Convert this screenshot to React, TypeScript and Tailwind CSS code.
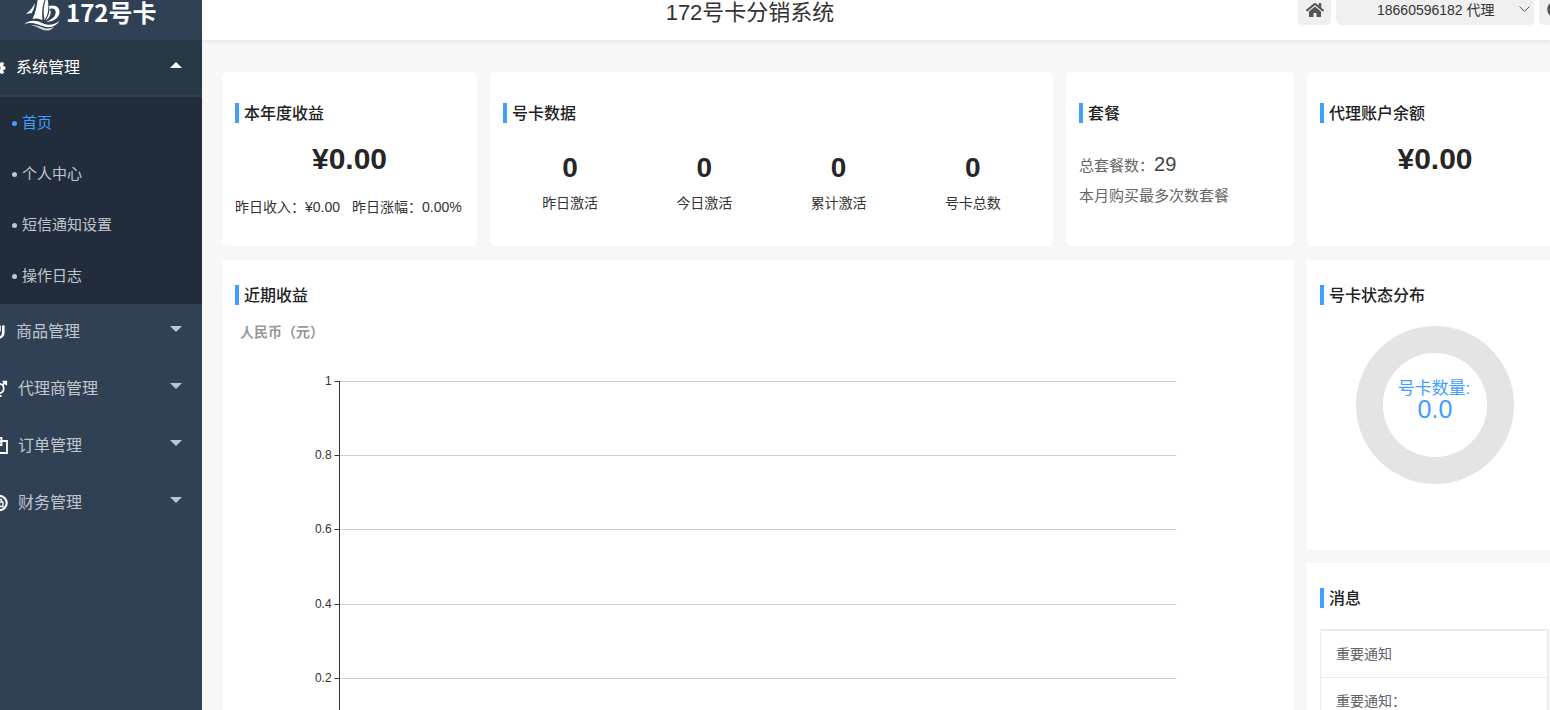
import { useState } from 'react'
import type { ReactNode } from 'react'
import { FaHome, FaPowerOff } from 'react-icons/fa'

interface MenuGroup {
  label: string
  icon: ReactNode
  wide?: boolean
  children?: string[]
}

const TEETH = [0, 45, 90, 135, 180, 225, 270, 315]

const GearIcon = () => (
  <svg width="16" height="16" viewBox="0 0 16 16" fill="currentColor">
    <circle cx="8" cy="8" r="4.2" fill="none" stroke="currentColor" strokeWidth="3.4" />
    {TEETH.map((deg) => (
      <path key={deg} d="M6.200 3 6.600.6h2.800L9.800 3z" transform={`rotate(${deg} 8 8)`} />
    ))}
  </svg>
)

const MagnetIcon = () => (
  <svg width="16" height="16" viewBox="0 0 16 16" fill="none" stroke="currentColor" strokeWidth="2.6">
    <path d="M3.500 1.500v7a4.900 5.200 0 0 0 9.800 0v-7M9.500 1.500v6" />
  </svg>
)

const AgentIcon = () => (
  <svg width="18" height="18" viewBox="0 0 18 18" fill="none" stroke="currentColor" strokeWidth="1.8">
    <circle cx="9" cy="8.5" r="4.7" />
    <path d="M12.5 5 16 1.8M12.5 1.6h3.7v3.7M9 13.2V18M6.5 16h5" />
  </svg>
)

const CopyIcon = () => (
  <svg width="18" height="18" viewBox="0 0 18 18" fill="none" stroke="currentColor" strokeWidth="1.8">
    <path d="M6 11H1.5V4L5 .9h6.5V4" />
    <path d="M5 .9V4H1.5" />
    <path d="M7.5 7.5 11 4h6v12H7.5z" />
    <path d="M11.5 4v4H8" />
  </svg>
)

const FinanceIcon = () => (
  <svg width="18" height="18" viewBox="0 0 18 18" fill="none" stroke="currentColor">
    <circle cx="9.5" cy="9" r="7.2" strokeWidth="2.2" />
    <path d="M6 8h7v4.5H6zM7.5 8V5.5h4V8M9.5 8.500v3.500" strokeWidth="1.3" />
  </svg>
)

const MENU: MenuGroup[] = [
  {
    label: '系统管理',
    icon: <GearIcon />,
    children: ['首页', '个人中心', '短信通知设置', '操作日志'],
  },
  { label: '商品管理', icon: <MagnetIcon /> },
  { label: '代理商管理', icon: <AgentIcon />, wide: true },
  { label: '订单管理', icon: <CopyIcon />, wide: true },
  { label: '财务管理', icon: <FinanceIcon />, wide: true },
]

const STATS = [
  { label: '昨日激活', value: 0 },
  { label: '今日激活', value: 0 },
  { label: '累计激活', value: 0 },
  { label: '号卡总数', value: 0 },
]

const MESSAGES = ['重要通知', '重要通知：']

const Y_LABELS = ['1', '0.8', '0.6', '0.4', '0.2']

/** Sail boat on two waves */
const Logo = () => (
  <svg width="38" height="34" viewBox="0 0 38 34" fill="#fff" className="shrink-0">
    <path d="M11 6C9 10 6 14 2 17c3-.8 4-1 5.500-.8C9.500 13 10.500 10 11 6z" />
    <path d="M14 0h8C18.500 7 17.500 14 18.500 23 15 21.500 12 21 8.500 22 12 15 13 8 14 0z" />
    <path d="M22.800 0C19.500 8 19 15 20.500 23c2-3 3.300-6 3.700-10 .4-5 .1-9-1.400-13z" />
    <path d="M25 9c6-2 11 1 10.500 6.500C35 21 29 25 22 25c5-2 9.500-5 9.700-9.500C31.800 12 29 10.500 25.500 12z" />
    <path d="M25.500 12c0 4-1.500 8-4 11.500 2.500-1.500 4.500-4 5-6.500.4-2 .2-3.500-1-5z" />
    <path d="M0 27.500c5-5 12-4.500 18-1.500 6 2.800 12 2.500 17.500-2.500C32 30 25 32 17 28.500 11 26 6 25 0 27.500z" />
    <path d="M7 28.500c5-1 8 .5 11 1.800 4 1.700 8 1.500 12-.3-3 4-8 4.500-12.500 2.300-3.500-1.800-6.500-3.500-10.500-3.800z" opacity=".8" />
  </svg>
)

const Caret = ({ up }: { up?: boolean }) => (
  <svg width="12" height="6" viewBox="0 0 12 6" fill="currentColor" className="mb-[6px]">
    {up ? <path d="M6 0l6 6H0z" /> : <path d="M0 0h12L6 6z" />}
  </svg>
)

function Sidebar() {
  const [active, setActive] = useState('首页')

  return (
    <aside className="w-[202px] shrink-0 overflow-hidden bg-[#304156] text-[#c2c6cc]">
      <div className="flex h-10 items-end gap-1 pl-6">
        <div className="flex h-full items-center pb-3">
          <Logo />
        </div>
        <span className="pb-4 font-['Noto_Sans_CJK_SC',sans-serif] text-2xl leading-6 font-bold text-white">
          172号卡
        </span>
      </div>
      <nav>
        {MENU.map((group) => (
          <div key={group.label}>
            <button
              type="button"
              className={
                group.children
                  ? 'flex h-[57px] w-full items-center border-b-2 border-[#304156] bg-[#293846] pr-5 text-white'
                  : 'flex h-[57px] w-full items-center pr-5 pb-[2px]'
              }
            >
              <span
                className={
                  group.wide
                    ? '-ml-[10px] flex w-7 shrink-0 text-white'
                    : '-ml-[10px] flex w-[26px] shrink-0 text-white'
                }
              >
                {group.icon}
              </span>
              <span className="flex-1 text-left text-base">{group.label}</span>
              <Caret up={!!group.children} />
            </button>
            {group.children && (
              <ul className="bg-[#212d3c] pt-px pb-[2px]">
                {group.children.map((item) => (
                  <li key={item}>
                    <a
                      href="#"
                      onClick={() => setActive(item)}
                      className={
                        item === active
                          ? 'flex h-[51px] items-center gap-[5px] pl-3 text-[15px] text-[#409eff]'
                          : 'flex h-[51px] items-center gap-[5px] pl-3 text-[15px]'
                      }
                    >
                      <span className="size-[5px] rounded-full bg-current" />
                      {item}
                    </a>
                  </li>
                ))}
              </ul>
            )}
          </div>
        ))}
      </nav>
    </aside>
  )
}

function Header() {
  return (
    <header className="z-10 flex h-10 shrink-0 items-start bg-white shadow-[0_1px_4px_rgba(0,21,41,0.1)]">
      <h1 className="flex-1 text-center text-[22px] leading-[26px] text-[#333]">172号卡分销系统</h1>
      <div className="-mr-[22px] flex gap-[5px] text-[#555]">
        <button
          type="button"
          aria-label="首页"
          className="flex h-[25px] w-[33px] items-center justify-center rounded-b-[5px] bg-[#efefef] pb-[6px]"
        >
          <FaHome size={18} />
        </button>
        <div className="relative w-[198px]">
          <select
            aria-label="账户"
            className="block h-[25px] w-full appearance-none rounded-b-[5px] bg-[#efefef] pb-[6px] pl-[41px] text-sm text-[#333]"
          >
            <option>18660596182 代理</option>
          </select>
          <svg
            className="pointer-events-none absolute top-[6px] right-1"
            width="11"
            height="7"
            viewBox="0 0 11 7"
            fill="none"
            stroke="#555"
          >
            <path d="M.5 .5l5 5 5-5" />
          </svg>
        </div>
        <button
          type="button"
          aria-label="退出"
          className="flex h-[25px] w-[33px] items-center justify-center rounded-b-[5px] bg-[#efefef] pb-[6px]"
        >
          <FaPowerOff size={17} />
        </button>
      </div>
    </header>
  )
}

const CardTitle = ({ children }: { children: ReactNode }) => (
  <h2 className="flex h-5 items-center border-l-4 border-[#409eff] pt-[2px] pl-[5px] text-base font-medium text-[#222]">
    {children}
  </h2>
)

const StatCard = ({ title, children }: { title: string; children: ReactNode }) => (
  <section className="h-[174px] rounded-[5px] bg-white px-[13px] pt-[31px]">
    <CardTitle>{title}</CardTitle>
    {children}
  </section>
)

const Money = ({ value }: { value: string }) => (
  <p className="mt-[18px] text-center text-3xl leading-9 font-bold text-[#262626]">¥{value}</p>
)

/** Empty line chart, only the value axis and its split lines */
function IncomeChart() {
  const top = 60
  const step = 74.4

  return (
    <svg width="100%" height="492" className="mt-4 block">
      <text x="5" y="16" fontSize="14" fontWeight="700" fill="#999">
        人民币（元）
      </text>
      {Y_LABELS.map((label, i) => {
        const y = Math.floor(top + i * step) + 0.5
        return (
          <g key={label}>
            <line x1="10%" x2="90%" y1={y} y2={y} stroke="#ccc" />
            <svg x="10%" y={y} overflow="visible">
              <line x1="-5" x2="0" y1="0" y2="0" stroke="#333" />
              <text x="-8" y="3" fontSize="12" textAnchor="end" fill="#333">
                {label}
              </text>
            </svg>
          </g>
        )
      })}
      <line x1="10%" x2="10%" y1={top} y2={top + step * 5} stroke="#333" shapeRendering="crispEdges" />
    </svg>
  )
}

function StatusRing() {
  return (
    <svg width="158" height="158" viewBox="0 0 158 158" className="mx-auto mt-[21px] block">
      <circle cx="79" cy="79" r="65.5" fill="none" stroke="#e4e4e4" strokeWidth="27" />
      <g fill="#409eff" textAnchor="middle">
        <text x="78" y="68" fontSize="17">
          号卡数量:
        </text>
        <text x="79" y="92" fontSize="25">
          0.0
        </text>
      </g>
    </svg>
  )
}

export default function App() {
  return (
    <div className="flex h-screen overflow-hidden bg-[#f7f7f7] font-['Liberation_Sans','Noto_Sans_CJK_SC',sans-serif] text-[#333]">
      <Sidebar />
      <div className="flex min-w-0 flex-1 flex-col overflow-hidden">
        <Header />
        <main className="-mr-[13px] grid grid-cols-[255fr_563fr_228fr_256fr] gap-x-[13px] gap-y-[14px] pt-8 pl-5">
          <StatCard title="本年度收益">
            <Money value="0.00" />
            <p className="mt-5 flex gap-3 text-sm whitespace-nowrap">
              <span>昨日收入：¥0.00</span>
              <span>昨日涨幅：0.00%</span>
            </p>
          </StatCard>

          <StatCard title="号卡数据">
            <dl className="mt-7 grid grid-cols-4 text-center">
              {STATS.map((stat) => (
                <div key={stat.label} className="flex flex-col-reverse gap-2">
                  <dt className="text-sm">{stat.label}</dt>
                  <dd className="text-[28px] leading-[34px] font-bold text-[#262626]">{stat.value}</dd>
                </div>
              ))}
            </dl>
          </StatCard>

          <StatCard title="套餐">
            <div className="mt-[26px] text-[15px] leading-[30px] text-[#666]">
              <p>
                总套餐数：<span className="text-xl leading-[30px] text-[#444]">29</span>
              </p>
              <p>本月购买最多次数套餐</p>
            </div>
          </StatCard>

          <StatCard title="代理账户余额">
            <Money value="0.00" />
          </StatCard>

          <section className="col-span-3 bg-white px-[13px] pt-[25px]">
            <CardTitle>近期收益</CardTitle>
            <IncomeChart />
          </section>

          <div className="flex flex-col gap-[13px]">
            <section className="h-[290px] bg-white px-[13px] pt-[25px]">
              <CardTitle>号卡状态分布</CardTitle>
              <StatusRing />
            </section>

            <section className="flex-1 bg-white px-[13px] pt-[25px]">
              <CardTitle>消息</CardTitle>
              <ul className="mt-[21px] mr-px border-t-2 border-r-2 border-l border-[#ebebeb] text-sm text-[#606266]">
                {MESSAGES.map((message) => (
                  <li key={message} className="flex h-[47px] items-center border-b border-[#ebebeb] px-[15px]">
                    {message}
                  </li>
                ))}
              </ul>
            </section>
          </div>
        </main>
      </div>
    </div>
  )
}
